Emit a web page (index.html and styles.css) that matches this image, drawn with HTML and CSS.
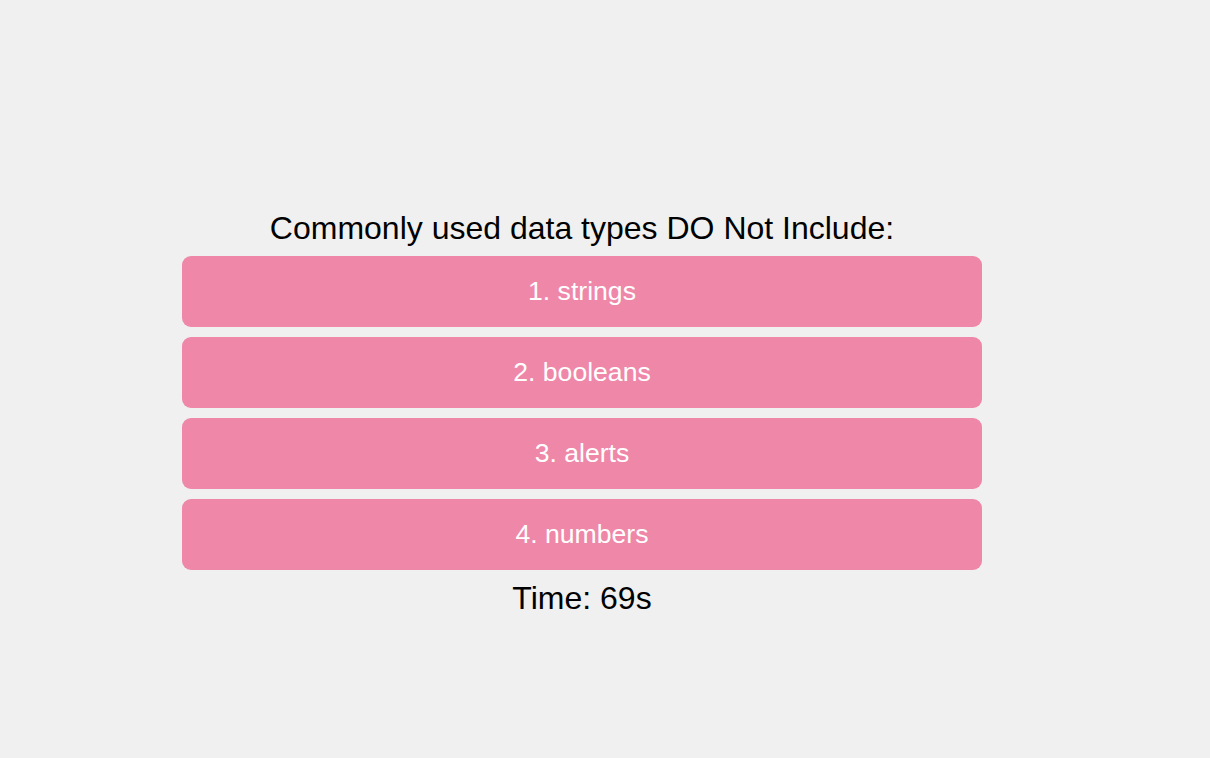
FILE: index.html
```html
<!DOCTYPE html>
<html>
<head>
<meta charset="utf-8">
<link rel="stylesheet" href="styles.css">
</head>
<body>
<main class="page">
  <section class="quiz">
    <h1 class="question">Commonly used data types DO Not Include:</h1>
    <div class="choices">
      <button class="choice">1. strings</button>
      <button class="choice">2. booleans</button>
      <button class="choice">3. alerts</button>
      <button class="choice">4. numbers</button>
    </div>
    <p class="timer">Time: 69s</p>
  </section>
</main>
</body>
</html>
```
FILE: styles.css
```css
html, body {
  margin: 0;
  padding: 0;
  background: #f0f0f0;
  font-family: "Liberation Sans", Arial, sans-serif;
}
.page {
  width: 1210px;
  height: 758px;
  padding: 208px 0 0 182px;
  box-sizing: border-box;
}
.quiz {
  width: 800px;
  display: flex;
  flex-direction: column;
  align-items: center;
}
.question {
  margin: 0;
  font-size: 32px;
  font-weight: normal;
  line-height: 40px;
  color: #000;
  text-align: center;
}
.choices {
  margin-top: 8px;
  width: 100%;
  display: flex;
  flex-direction: column;
  gap: 10px;
}
.choice {
  height: 71px;
  border: none;
  border-radius: 9px;
  background: #ef87a9;
  color: #fff;
  font-family: "Liberation Sans", Arial, sans-serif;
  font-size: 26.6px;
  padding: 0;
}
.timer {
  margin: 8px 0 0;
  font-size: 32px;
  line-height: 40px;
  color: #000;
}
```
